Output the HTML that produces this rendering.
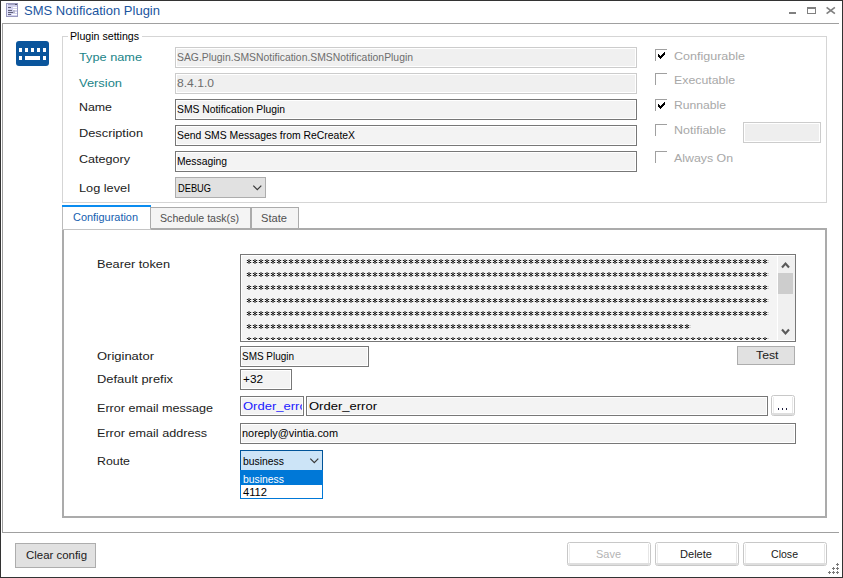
<!DOCTYPE html>
<html><head><meta charset="utf-8"><title>SMS Notification Plugin</title>
<style>
html,body{margin:0;padding:0;background:#fff;width:843px;height:578px;overflow:hidden}
svg{display:block}
text{font-family:"Liberation Sans",sans-serif;font-size:11px;fill:#000}
.lbl,.teal,.chk{font-size:11.5px}
.lbl{fill:#222}
.teal{fill:#1a8488}
.dis{fill:#6d6d6d}
.chk{fill:#a8a8a8}
.btn{font-size:11.5px}
</style></head>
<body>
<svg width="843" height="578" viewBox="0 0 843 578" shape-rendering="crispEdges">
<!-- window background and border -->
<rect x="0" y="0" width="843" height="578" fill="#fff"/>
<rect x="0" y="0" width="843" height="1" fill="#333"/>
<rect x="0" y="577" width="843" height="1" fill="#333"/>
<rect x="0" y="0" width="1" height="578" fill="#333"/>
<rect x="842" y="0" width="1" height="578" fill="#333"/>

<!-- title icon -->
<rect x="6" y="3" width="12" height="14" fill="#9a9ac0"/>
<rect x="7" y="4" width="10" height="12" fill="#d2d2ee"/>
<rect x="7" y="4" width="1" height="12" fill="#e6e6ff"/>
<rect x="8" y="4" width="8" height="1" fill="#a0a0c0"/><rect x="15" y="4" width="2" height="1" fill="#505068"/>
<g fill="#606078">
<rect x="8" y="7" width="3" height="1"/>
<rect x="8" y="10" width="4" height="1"/>
<rect x="8" y="12" width="5" height="1"/>
<rect x="8" y="14" width="3" height="1"/>
</g>
<rect x="13" y="10" width="2" height="3" fill="#b8b8cc"/>
<g fill="#fff">
<rect x="13" y="7" width="4" height="1"/>
<rect x="13" y="9" width="4" height="1"/>
<rect x="15" y="12" width="2" height="1"/>
<rect x="12" y="14" width="5" height="1"/>
</g>
<!-- title -->
<text x="24" y="15" style="font-size:13px;fill:#1a55a0" textLength="136" lengthAdjust="spacingAndGlyphs">SMS Notification Plugin</text>
<!-- title buttons -->
<rect x="789" y="12" width="7" height="2" fill="#808080"/>
<g fill="#808080"><rect x="807" y="7" width="9" height="2"/><rect x="807" y="13" width="9" height="1"/><rect x="807" y="7" width="1" height="7"/><rect x="815" y="7" width="1" height="7"/></g>
<path d="M826.6 7.4 L834.9 13.6 M834.9 7.4 L826.6 13.6" stroke="#808080" stroke-width="1.7" shape-rendering="auto"/>

<!-- outer panel -->
<rect x="2" y="23" width="837" height="1" fill="#a0a0a0"/>
<rect x="2" y="23" width="1" height="510" fill="#a0a0a0"/>
<rect x="2" y="532" width="837" height="1" fill="#a0a0a0"/>

<!-- keyboard icon -->
<rect x="16" y="41" width="33" height="25" rx="3" fill="#0a559c" shape-rendering="auto"/>
<g fill="#fff">
<rect x="19" y="48" width="3" height="4"/><rect x="25" y="48" width="3" height="4"/><rect x="31" y="48" width="3" height="4"/><rect x="37" y="48" width="3" height="4"/><rect x="43" y="48" width="3" height="4"/>
<rect x="19" y="56" width="3" height="4"/><rect x="25" y="56" width="15" height="4"/><rect x="43" y="56" width="3" height="4"/>
</g>

<!-- group box -->
<g fill="#d5d5d5">
<rect x="62" y="36" width="6" height="1"/>
<rect x="142" y="36" width="685" height="1"/>
<rect x="62" y="36" width="1" height="167"/>
<rect x="826" y="36" width="1" height="167"/>
<rect x="62" y="202" width="765" height="1"/>
</g>
<text x="70" y="40" textLength="69" lengthAdjust="spacingAndGlyphs">Plugin settings</text>

<!-- labels -->
<text class="teal" x="79" y="61" textLength="63" lengthAdjust="spacingAndGlyphs">Type name</text>
<text class="teal" x="79" y="87" textLength="43" lengthAdjust="spacingAndGlyphs">Version</text>
<text class="lbl" x="79" y="111" textLength="33" lengthAdjust="spacingAndGlyphs">Name</text>
<text class="lbl" x="79" y="137" textLength="64" lengthAdjust="spacingAndGlyphs">Description</text>
<text class="lbl" x="79" y="163" textLength="51" lengthAdjust="spacingAndGlyphs">Category</text>
<text class="lbl" x="79" y="192" textLength="51" lengthAdjust="spacingAndGlyphs">Log level</text>

<!-- disabled inputs -->
<g>
<rect x="175" y="47" width="462" height="21" fill="#cccccc"/>
<rect x="176" y="48" width="460" height="19" fill="#fff"/>
<rect x="177" y="49" width="458" height="17" fill="#f0f0f0"/>
<rect x="175" y="73" width="462" height="21" fill="#cccccc"/>
<rect x="176" y="74" width="460" height="19" fill="#fff"/>
<rect x="177" y="75" width="458" height="17" fill="#f0f0f0"/>
</g>
<text class="dis" x="177" y="61" textLength="236" lengthAdjust="spacingAndGlyphs">SAG.Plugin.SMSNotification.SMSNotificationPlugin</text>
<text class="dis" x="177" y="87" textLength="37" lengthAdjust="spacingAndGlyphs">8.4.1.0</text>
<!-- active inputs -->
<g>
<rect x="175" y="99" width="462" height="21" fill="#777"/>
<rect x="176" y="100" width="460" height="19" fill="#fff"/>
<rect x="177" y="101" width="458" height="17" fill="#f3f3f3"/>
<rect x="175" y="125" width="462" height="21" fill="#777"/>
<rect x="176" y="126" width="460" height="19" fill="#fff"/>
<rect x="177" y="127" width="458" height="17" fill="#f3f3f3"/>
<rect x="175" y="151" width="462" height="21" fill="#777"/>
<rect x="176" y="152" width="460" height="19" fill="#fff"/>
<rect x="177" y="153" width="458" height="17" fill="#f3f3f3"/>
</g>
<text x="177" y="113" textLength="108" lengthAdjust="spacingAndGlyphs">SMS Notification Plugin</text>
<text x="177" y="139" textLength="178" lengthAdjust="spacingAndGlyphs">Send SMS Messages from ReCreateX</text>
<text x="177" y="165" textLength="50" lengthAdjust="spacingAndGlyphs">Messaging</text>
<!-- log level combo -->
<rect x="175" y="177" width="91" height="21" fill="#adadad"/>
<rect x="176" y="178" width="89" height="19" fill="#e1e1e1"/>
<text x="178" y="192" textLength="33" lengthAdjust="spacingAndGlyphs">DEBUG</text>
<path d="M253.3 185.6 L257.3 189.6 L261.3 185.6" fill="none" stroke="#3a3a3a" stroke-width="1.25" shape-rendering="auto"/>

<!-- checkboxes -->
<g fill="#a0a0a0">
<rect x="655" y="49" width="12" height="1"/><rect x="655" y="49" width="1" height="12"/>
<rect x="655" y="73" width="12" height="1"/><rect x="655" y="73" width="1" height="12"/>
<rect x="655" y="99" width="12" height="1"/><rect x="655" y="99" width="1" height="12"/>
<rect x="655" y="124" width="12" height="1"/><rect x="655" y="124" width="1" height="12"/>
<rect x="655" y="151" width="12" height="1"/><rect x="655" y="151" width="1" height="12"/>
</g>
<g fill="#000"><rect x="658" y="54" width="1" height="3"/><rect x="659" y="55" width="1" height="3"/><rect x="660" y="56" width="1" height="3"/><rect x="661" y="55" width="1" height="3"/><rect x="662" y="54" width="1" height="3"/><rect x="663" y="53" width="1" height="3"/><rect x="664" y="52" width="1" height="3"/></g>
<g fill="#000"><rect x="658" y="104" width="1" height="3"/><rect x="659" y="105" width="1" height="3"/><rect x="660" y="106" width="1" height="3"/><rect x="661" y="105" width="1" height="3"/><rect x="662" y="104" width="1" height="3"/><rect x="663" y="103" width="1" height="3"/><rect x="664" y="102" width="1" height="3"/></g>
<text class="chk" x="674" y="60" textLength="71" lengthAdjust="spacingAndGlyphs">Configurable</text>
<text class="chk" x="674" y="84" textLength="61" lengthAdjust="spacingAndGlyphs">Executable</text>
<text class="chk" x="674" y="109" textLength="52" lengthAdjust="spacingAndGlyphs">Runnable</text>
<text class="chk" x="674" y="134" textLength="52" lengthAdjust="spacingAndGlyphs">Notifiable</text>
<text class="chk" x="674" y="162" textLength="59" lengthAdjust="spacingAndGlyphs">Always On</text>
<rect x="743" y="122" width="78" height="21" fill="#cccccc"/>
<rect x="744" y="123" width="76" height="19" fill="#fff"/>
<rect x="745" y="124" width="74" height="17" fill="#eeeeee"/>

<!-- tabs -->
<rect x="151" y="228" width="676" height="2" fill="#ababab"/>
<rect x="62" y="229" width="89" height="1" fill="#c4c4c4"/>
<rect x="62" y="230" width="2" height="288" fill="#ababab"/>
<rect x="825" y="228" width="2" height="290" fill="#ababab"/>
<rect x="62" y="516" width="765" height="2" fill="#ababab"/>
<!-- configuration tab -->
<rect x="62" y="205" width="89" height="2" fill="#0a8cf0"/>
<rect x="62" y="207" width="1" height="22" fill="#bbbbbb"/>
<rect x="150" y="207" width="1" height="22" fill="#bbbbbb"/>
<text x="73" y="221" style="fill:#1460b0" textLength="65" lengthAdjust="spacingAndGlyphs">Configuration</text>
<!-- schedule tab -->
<rect x="150" y="207" width="101" height="21" fill="#ababab"/>
<rect x="151" y="208" width="99" height="20" fill="#f4f4f4"/>
<text x="160" y="222" style="fill:#505050" textLength="79" lengthAdjust="spacingAndGlyphs">Schedule task(s)</text>
<rect x="251" y="207" width="48" height="21" fill="#ababab"/>
<rect x="252" y="208" width="46" height="20" fill="#f4f4f4"/>
<text x="261" y="222" style="fill:#505050" textLength="26" lengthAdjust="spacingAndGlyphs">State</text>

<!-- configuration panel content -->
<text class="lbl" x="97" y="268" textLength="73" lengthAdjust="spacingAndGlyphs">Bearer token</text>
<rect x="240" y="254" width="556" height="88" fill="#777"/>
<rect x="241" y="255" width="554" height="86" fill="#fff"/>
<rect x="242" y="256" width="552" height="84" fill="#f4f4f4"/>
<defs>
<pattern id="ast" patternUnits="userSpaceOnUse" x="245" y="259" width="6" height="13">
<rect x="3" y="0" width="2" height="1" fill="#909090"/>
<rect x="1" y="1" width="1" height="1" fill="#d0d0d0"/><rect x="2" y="1" width="1" height="1" fill="#151515"/><rect x="3" y="1" width="2" height="1" fill="#747474"/><rect x="5" y="1" width="1" height="1" fill="#202020"/>
<rect x="3" y="2" width="2" height="1" fill="#282828"/>
<rect x="1" y="3" width="1" height="1" fill="#d0d0d0"/><rect x="2" y="3" width="1" height="1" fill="#151515"/><rect x="3" y="3" width="2" height="1" fill="#747474"/><rect x="5" y="3" width="1" height="1" fill="#202020"/>
<rect x="3" y="4" width="2" height="1" fill="#909090"/>
<rect x="0" y="1" width="1" height="1" fill="#c8c8c8"/><rect x="0" y="3" width="1" height="1" fill="#c8c8c8"/>
</pattern>
</defs>
<rect x="246" y="259" width="523" height="65" fill="url(#ast)"/>
<rect x="246" y="324" width="445" height="13" fill="url(#ast)"/>
<rect x="246" y="337" width="523" height="3" fill="url(#ast)"/>
<rect x="777" y="256" width="1" height="84" fill="#fff"/>
<rect x="778" y="256" width="17" height="84" fill="#f0f0f0"/>
<rect x="778" y="273" width="15" height="21" fill="#cdcdcd"/>
<path d="M782 267.5 L785.5 263.5 L789 267.5" fill="none" stroke="#5a5a5a" stroke-width="2.1" shape-rendering="auto"/>
<path d="M782 329.5 L785.5 333.5 L789 329.5" fill="none" stroke="#5a5a5a" stroke-width="2.1" shape-rendering="auto"/>

<text class="lbl" x="97" y="360" textLength="57" lengthAdjust="spacingAndGlyphs">Originator</text>
<rect x="240" y="346" width="129" height="21" fill="#777"/>
<rect x="241" y="347" width="127" height="19" fill="#fff"/>
<rect x="242" y="348" width="125" height="17" fill="#f3f3f3"/>
<text x="242" y="360" textLength="52" lengthAdjust="spacingAndGlyphs">SMS Plugin</text>
<rect x="737" y="346" width="58" height="19" fill="#adadad"/>
<rect x="738" y="347" width="56" height="17" fill="#e1e1e1"/>
<text x="756" y="359" style="fill:#202020" textLength="22.5" lengthAdjust="spacingAndGlyphs">Test</text>

<text class="lbl" x="97" y="383" textLength="76" lengthAdjust="spacingAndGlyphs">Default prefix</text>
<rect x="240" y="369" width="52" height="21" fill="#777"/>
<rect x="241" y="370" width="50" height="19" fill="#fff"/>
<rect x="242" y="371" width="48" height="17" fill="#f3f3f3"/>
<text x="243" y="383" textLength="20" lengthAdjust="spacingAndGlyphs">+32</text>

<text class="lbl" x="97" y="412" textLength="116" lengthAdjust="spacingAndGlyphs">Error email message</text>
<rect x="240" y="396" width="64" height="20" fill="#777"/>
<rect x="241" y="397" width="62" height="18" fill="#fff"/>
<rect x="242" y="398" width="60" height="16" fill="#f3f3f3"/>
<svg x="242" y="396" width="60" height="20" overflow="hidden"><text x="1" y="14" style="fill:#1a1aff" textLength="68" lengthAdjust="spacingAndGlyphs">Order_error</text></svg>
<rect x="306" y="396" width="462" height="20" fill="#777"/>
<rect x="307" y="397" width="460" height="18" fill="#fff"/>
<rect x="308" y="398" width="458" height="16" fill="#f3f3f3"/>
<text x="309" y="410" textLength="68" lengthAdjust="spacingAndGlyphs">Order_error</text>
<rect x="771.5" y="395.5" width="23" height="20" rx="2" fill="#fff" stroke="#c8c8c8" shape-rendering="auto"/>
<rect x="773" y="397" width="1" height="16" fill="#ededed"/><rect x="792" y="397" width="1" height="16" fill="#e6e6e6"/>
<rect x="772" y="413" width="22" height="2" fill="#dedede"/>
<rect x="778" y="408" width="1" height="2" fill="#202040"/><rect x="782" y="408" width="1" height="2" fill="#202040"/><rect x="786" y="408" width="1" height="2" fill="#202040"/>

<text class="lbl" x="97" y="437" textLength="110" lengthAdjust="spacingAndGlyphs">Error email address</text>
<rect x="240" y="423" width="556" height="21" fill="#777"/>
<rect x="241" y="424" width="554" height="19" fill="#fff"/>
<rect x="242" y="425" width="552" height="17" fill="#f3f3f3"/>
<text x="242" y="437" textLength="96" lengthAdjust="spacingAndGlyphs">noreply@vintia.com</text>

<text class="lbl" x="97" y="465" textLength="33" lengthAdjust="spacingAndGlyphs">Route</text>
<rect x="240" y="450" width="83" height="21" fill="#005499"/>
<rect x="241" y="451" width="81" height="19" fill="#cce4f7"/>
<text x="243" y="465" textLength="41" lengthAdjust="spacingAndGlyphs">business</text>
<path d="M310.3 458.6 L314.3 462.6 L318.3 458.6" fill="none" stroke="#3a3a3a" stroke-width="1.25" shape-rendering="auto"/>
<rect x="240" y="470" width="83" height="29" fill="#0078d7"/>
<rect x="241" y="471" width="81" height="14" fill="#0078d7"/>
<rect x="241" y="485" width="81" height="13" fill="#fff"/>
<text x="243" y="483" style="fill:#fff" textLength="41" lengthAdjust="spacingAndGlyphs">business</text>
<text x="243" y="496" textLength="24" lengthAdjust="spacingAndGlyphs">4112</text>

<!-- bottom buttons -->
<rect x="15" y="543" width="81" height="25" fill="#adadad"/>
<rect x="16" y="544" width="79" height="23" fill="#e1e1e1"/>
<text x="26" y="559" style="fill:#202020" textLength="61" lengthAdjust="spacingAndGlyphs">Clear config</text>
<rect x="567.5" y="542.5" width="83" height="23" rx="2" fill="#fff" stroke="#c8c8c8" shape-rendering="auto"/>
<rect x="569" y="544" width="1" height="19" fill="#ededed"/><rect x="648" y="544" width="1" height="19" fill="#e6e6e6"/>
<rect x="568" y="563" width="82" height="2" fill="#dedede"/>
<rect x="655.5" y="542.5" width="83" height="23" rx="2" fill="#fff" stroke="#c8c8c8" shape-rendering="auto"/>
<rect x="657" y="544" width="1" height="19" fill="#ededed"/><rect x="736" y="544" width="1" height="19" fill="#e6e6e6"/>
<rect x="656" y="563" width="82" height="2" fill="#dedede"/>
<rect x="743.5" y="542.5" width="83" height="23" rx="2" fill="#fff" stroke="#c8c8c8" shape-rendering="auto"/>
<rect x="745" y="544" width="1" height="19" fill="#ededed"/><rect x="824" y="544" width="1" height="19" fill="#e6e6e6"/>
<rect x="744" y="563" width="82" height="2" fill="#dedede"/>
<text x="596" y="558" style="fill:#b4b4b4" textLength="25" lengthAdjust="spacingAndGlyphs">Save</text>
<text x="680" y="558" style="fill:#202020" textLength="32" lengthAdjust="spacingAndGlyphs">Delete</text>
<text x="771" y="558" style="fill:#202020" textLength="27" lengthAdjust="spacingAndGlyphs">Close</text>
<!-- size grip -->
<g fill="#7a7a7a"><rect x="836" y="564" width="3" height="1"/><rect x="837" y="563" width="1" height="3"/><rect x="832" y="568" width="3" height="1"/><rect x="833" y="567" width="1" height="3"/><rect x="836" y="568" width="3" height="1"/><rect x="837" y="567" width="1" height="3"/><rect x="828" y="572" width="3" height="1"/><rect x="829" y="571" width="1" height="3"/><rect x="832" y="572" width="3" height="1"/><rect x="833" y="571" width="1" height="3"/><rect x="836" y="572" width="3" height="1"/><rect x="837" y="571" width="1" height="3"/></g>
</svg>
</body></html>
